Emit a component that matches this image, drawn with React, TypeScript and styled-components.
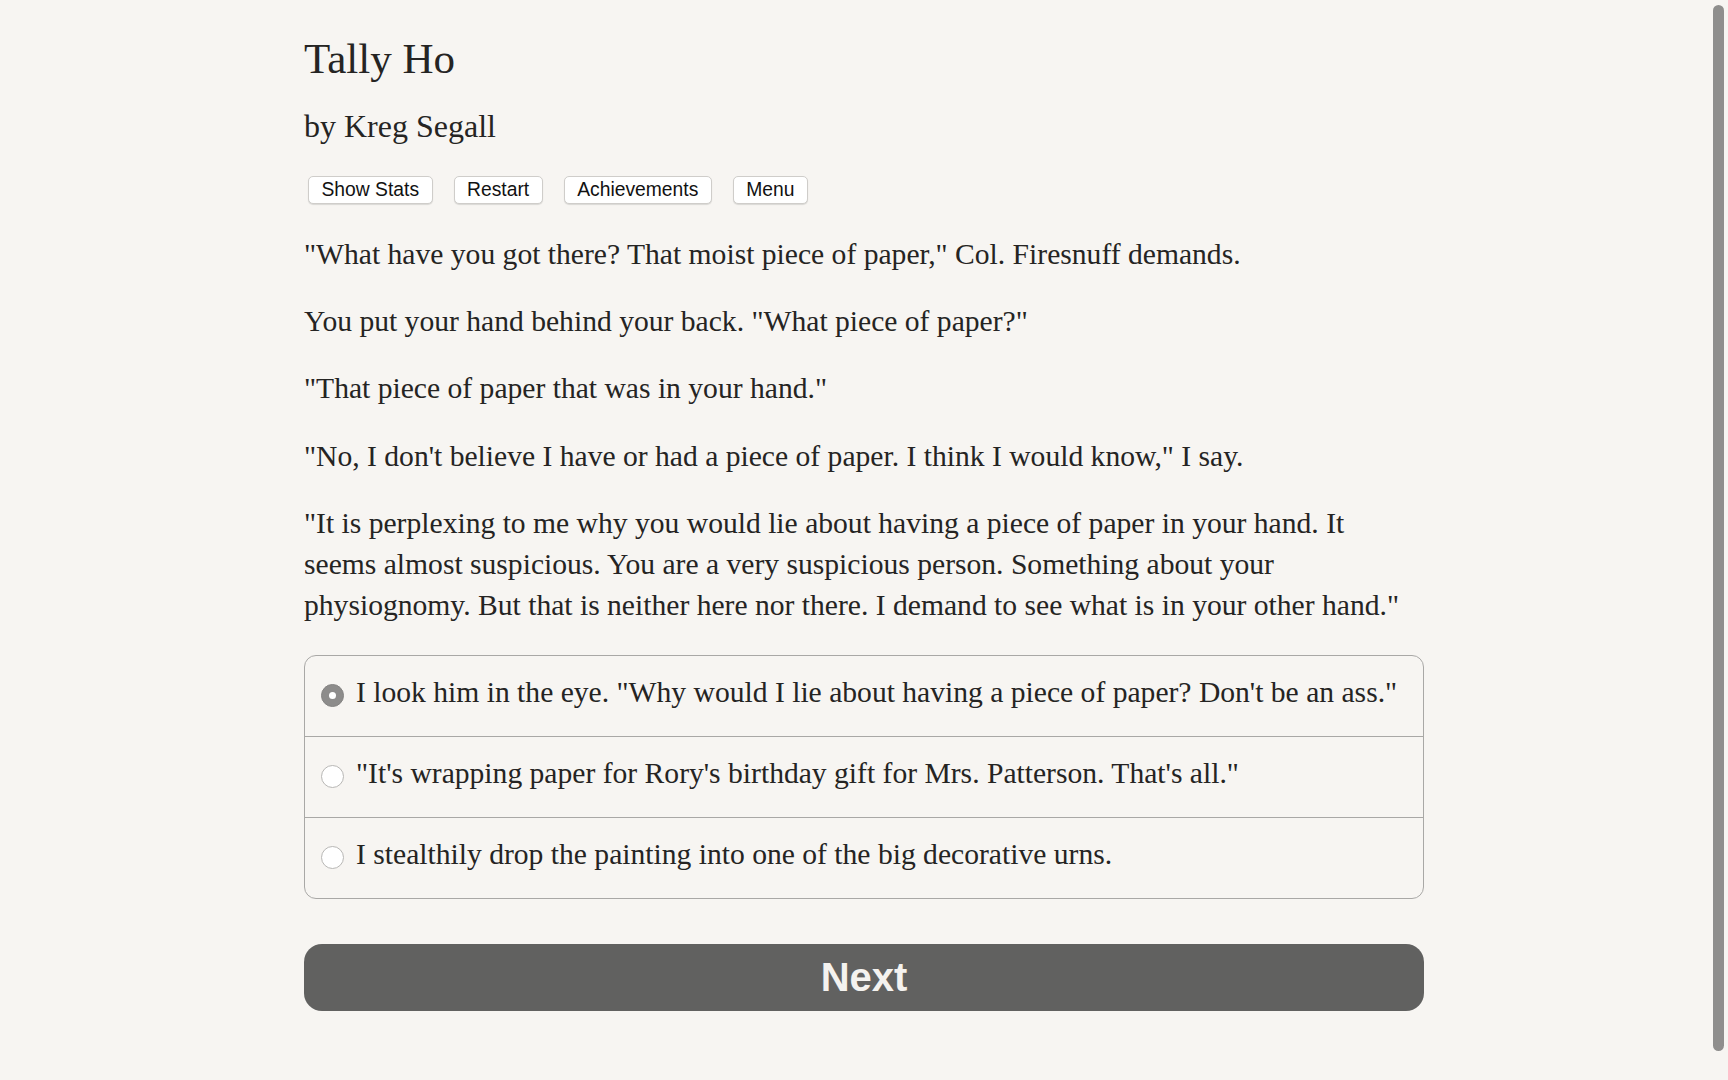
import React from "react";
import styled, { createGlobalStyle } from "styled-components";

const GlobalStyle = createGlobalStyle`
  html, body {
    margin: 0;
    padding: 0;
    background: #f7f5f2;
    overflow: hidden;
  }
  body {
    font-family: "Liberation Serif", "Times New Roman", serif;
    color: #252423;
  }
`;

const Page = styled.div`
  min-height: 100vh;
  background: #f7f5f2;
`;

const Column = styled.main`
  width: 1120px;
  margin: 0 auto;
  padding-top: 34px;
  display: flex;
  flex-direction: column;
`;

const Title = styled.h1`
  margin: 0;
  font-family: "Liberation Serif", serif;
  font-weight: normal;
  font-size: 43px;
  line-height: 50px;
  color: #252423;
`;

const Byline = styled.h2`
  margin: 22px 0 0;
  font-family: "Liberation Serif", serif;
  font-weight: normal;
  font-size: 32px;
  line-height: 40px;
  color: #252423;
`;

const Toolbar = styled.nav`
  margin-top: 29.6px;
  padding-left: 4px;
  display: flex;
  gap: 21px;
`;

const ToolButton = styled.button`
  height: 28px;
  padding: 0 12.5px;
  background: #ffffff;
  border: 1px solid #cfcdca;
  border-radius: 5px;
  box-shadow: 0 1px 1px rgba(0, 0, 0, 0.12);
  font-family: "Liberation Sans", Arial, sans-serif;
  font-size: 19.3px;
  line-height: 26px;
  color: #111;
  cursor: pointer;
`;

const Story = styled.section`
  margin-top: 30.2px;
  display: flex;
  flex-direction: column;
  gap: 26.5px;
`;

const Para = styled.p`
  margin: 0;
  max-width: 1110px;
  font-size: 29.6px;
  line-height: 40.8px;
`;

const Choices = styled.div`
  margin-top: 29.5px;
  border: 1px solid #a9a8a6;
  border-radius: 12px;
  overflow: hidden;
  display: flex;
  flex-direction: column;
`;

const ChoiceRow = styled.label`
  min-height: 80px;
  padding: 0 16px;
  display: flex;
  align-items: center;
  gap: 12px;
  cursor: pointer;
  & + & {
    border-top: 1px solid #a9a8a6;
  }
`;

const Radio = styled.span<{ $checked?: boolean }>`
  flex: none;
  width: 23px;
  height: 23px;
  border-radius: 50%;
  box-sizing: border-box;
  position: relative;
  background: ${(p) => (p.$checked ? "#8d8c8b" : "#ffffff")};
  border: 1px solid ${(p) => (p.$checked ? "#858483" : "#b8b7b5")};
  &::after {
    content: "";
    display: ${(p) => (p.$checked ? "block" : "none")};
    position: absolute;
    left: 50%;
    top: 50%;
    width: 7px;
    height: 7px;
    margin: -3.5px 0 0 -3.5px;
    border-radius: 50%;
    background: #ffffff;
  }
`;

const ChoiceText = styled.span`
  font-size: 29.6px;
  line-height: 40.8px;
  padding-bottom: 6.6px;
`;

const NextButton = styled.button`
  margin-top: 45.2px;
  height: 66.5px;
  width: 100%;
  border: none;
  border-radius: 18px;
  background: #616160;
  color: #f4f2ef;
  font-family: "Liberation Sans", Arial, sans-serif;
  font-weight: bold;
  font-size: 40px;
  display: flex;
  align-items: center;
  justify-content: center;
  cursor: pointer;
`;

const ScrollThumb = styled.div`
  position: fixed;
  top: 5px;
  right: 4px;
  width: 11px;
  height: 1046px;
  border-radius: 6px;
  background: #8f8e8d;
`;

const paragraphs = [
  "\"What have you got there? That moist piece of paper,\" Col. Firesnuff demands.",
  "You put your hand behind your back. \"What piece of paper?\"",
  "\"That piece of paper that was in your hand.\"",
  "\"No, I don't believe I have or had a piece of paper. I think I would know,\" I say.",
  "\"It is perplexing to me why you would lie about having a piece of paper in your hand. It seems almost suspicious. You are a very suspicious person. Something about your physiognomy. But that is neither here nor there. I demand to see what is in your other hand.\"",
];

const choices = [
  "I look him in the eye. \"Why would I lie about having a piece of paper? Don't be an ass.\"",
  "\"It's wrapping paper for Rory's birthday gift for Mrs. Patterson. That's all.\"",
  "I stealthily drop the painting into one of the big decorative urns.",
];

export default function App() {
  return (
    <Page>
      <GlobalStyle />
      <Column>
        <Title>Tally Ho</Title>
        <Byline>by Kreg Segall</Byline>
        <Toolbar>
          <ToolButton>Show Stats</ToolButton>
          <ToolButton>Restart</ToolButton>
          <ToolButton>Achievements</ToolButton>
          <ToolButton>Menu</ToolButton>
        </Toolbar>
        <Story>
          {paragraphs.map((t, i) => (
            <Para key={i}>{t}</Para>
          ))}
        </Story>
        <Choices>
          {choices.map((c, i) => (
            <ChoiceRow key={i}>
              <Radio $checked={i === 0} />
              <ChoiceText>{c}</ChoiceText>
            </ChoiceRow>
          ))}
        </Choices>
        <NextButton>Next</NextButton>
      </Column>
      <ScrollThumb />
    </Page>
  );
}
